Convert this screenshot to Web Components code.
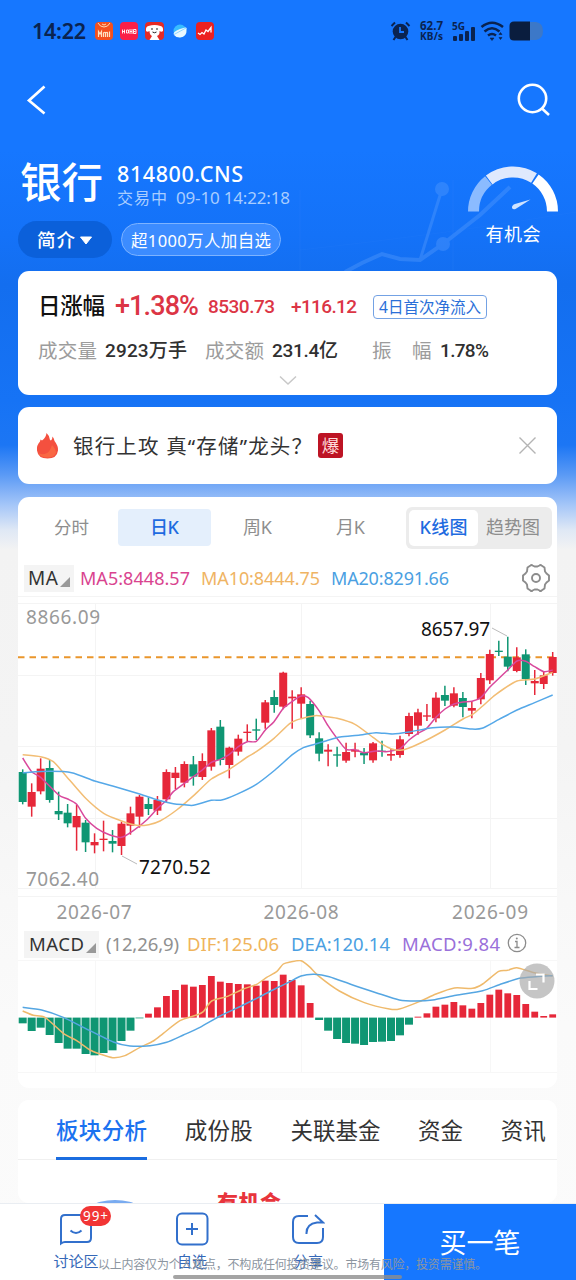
<!DOCTYPE html>
<html lang="zh-CN">
<head>
<meta charset="utf-8">
<title>银行 814800.CNS</title>
<style>
html,body{margin:0;padding:0}
body{width:576px;height:1280px;overflow:hidden;font-family:"Noto Sans","Noto Sans CJK SC",sans-serif;background:#fafafa}
</style>
</head>
<body>
<sector-page></sector-page>
<script>
const define=(name,html,setup)=>{
  const t=document.createElement('template');t.innerHTML=html;
  customElements.define(name,class extends HTMLElement{
    constructor(){super();this.attachShadow({mode:'open'}).append(t.content.cloneNode(true));}
    connectedCallback(){if(setup)setup(this,this.shadowRoot);}
  });
};

/* Single-line label: s = font size, w = width the text is tracked to. */
define('fit-text',`<style>:host{display:block;flex:none;white-space:nowrap;line-height:1.2}span{display:inline-block}</style><span><slot></slot></span>`,(el,root)=>{
  const span=root.querySelector('span');
  if(el.hasAttribute('s'))el.style.fontSize=el.getAttribute('s')+'px';
  const w=+el.getAttribute('w');
  if(w){
    const n=el.textContent.length;
    const nat=span.getBoundingClientRect().width;
    span.style.letterSpacing=((w-nat)/Math.max(1,n-1))+'px';
    el.style.width=w+'px';
  }
});

define('status-bar',`<style>
:host{display:flex;align-items:center;height:62px;padding:0 32px 0 32px;box-sizing:border-box;color:#0a2350}
.apps{display:flex;gap:7px;margin-left:9px;flex:1}
.sys{display:flex;align-items:center}
svg{display:block;overflow:visible}
.rate{margin:0 9px 0 9px;font-weight:700}
.rate fit-text{line-height:11px}
</style>
<fit-text s="21.500" w="54" style="font-weight:600">14:22</fit-text>
<div class="apps">
<svg width="18" height="18" viewBox="0 0 18 18"><rect width="18" height="18" rx="4" fill="#f4501f"/><path d="M3 1q2 4 6 4t6-4M7 2q2 2 4 0" fill="none" stroke="#ffd9b0" stroke-width="1"/><path d="M3.500 15V9.500l1.500 2.500 1.500-2.500V15M8.500 15v-4q1.500-1.500 2 0v4M10.500 11q2-1.500 2 0v4M14.500 9.500V15" fill="none" stroke="#ffe3c4" stroke-width="1.200"/></svg>
<svg width="18" height="18" viewBox="0 0 18 18"><rect width="18" height="18" rx="4" fill="#fb1f48"/><path d="M2.500 7.500v4M4.500 7.500v4M2 9.500h3M6.500 8v3h2V8zM10 7v5M12 7v5M10 9.500h2M13.500 7.500h2.500v4h-2.500zM13.500 9.500h2" fill="none" stroke="#fff" stroke-width=".9"/></svg>
<svg width="19" height="18" viewBox="0 0 19 18"><rect width="19" height="18" rx="4" fill="#e52a25"/><path d="M3.500 4Q.5 4.500 1 9q1.500 1.500 3.500 0 0 4 2.500 5l-2.500 4h10L12 14q3-1 2.500-5 2 1.500 3.500 0 .5-4.500-2.500-5-6-2-12 0z" fill="#fff"/><circle cx="7" cy="7" r=".8"/><circle cx="12" cy="7" r=".8"/><path d="M7.500 10q2 1.500 4 0" fill="none" stroke="#222"/></svg>
<svg width="18" height="18" viewBox="0 0 18 18"><circle cx="9" cy="9" r="6.500" fill="#38bcff"/><path d="M3 13Q1 10 9 7t6.500 0Q16 15 9 15.500 5 15.500 3 13z" fill="#eaf8ff"/><path d="M3 12.500 15 6" stroke="#8fd7ff"/></svg>
<svg width="18" height="18" viewBox="0 0 18 18"><rect width="18" height="18" rx="4" fill="#ec2020"/><path d="M2 11l2 1.500 2-2 2 1.500 2-4 2 1.500 3-4v5" fill="none" stroke="#fff" stroke-width="1.300"/></svg>
</div>
<div class="sys">
<svg width="20" height="20" viewBox="0 0 20 20"><circle cx="9.500" cy="10.500" r="7.800" fill="#0a2350"/><path d="M.5 5 4 1.500M18.500 5 15 1.500M4.500 16l-2 3M14.500 16l2 3" stroke="#0a2350" stroke-width="2"/><path d="M9 6v5h4" fill="none" stroke="#1677ff" stroke-width="1.800"/></svg>
<div class="rate"><fit-text s="11.500" w="23">62.7</fit-text><fit-text s="10" w="23">KB/s</fit-text></div>
<svg width="23" height="20" viewBox="0 0 23 20" fill="#0a2350"><text x="0" y="8.500" font-size="10.500" font-weight="700" font-family="Noto Sans" textLength="13" lengthAdjust="spacingAndGlyphs">5G</text><rect x="1" y="15" width="4" height="5" rx="1"/><rect x="7" y="13" width="4" height="7" rx="1"/><rect x="13" y="10" width="4" height="10" rx="1"/><rect x="19" y="6" width="4" height="14" rx="1"/></svg>
<svg width="25" height="20" viewBox="0 0 25 20" style="margin-left:5px" fill="none" stroke="#0a2350" stroke-width="2.500"><path d="M1.500 6Q12 -2.500 23 6M4.500 10.500Q12 4 19.500 10.500M8 14.500Q12 11.500 16 14.500"/><path d="M10 17h4l-2 2.500zM19 13.500l1.500-2 1.500 2zM19 16.500l1.500 2 1.500-2z" fill="#0a2350" stroke-width=".6"/></svg>
<svg width="35" height="20" viewBox="0 0 35 20" style="margin-left:4px"><path d="M5 1h22q7 1 7 9t-7 9H5q-4 0-4-4V5q0-4 4-4z" fill="#3c78c8"/><path d="M5 .5h16v19H5q-4.500 0-4.500-4.500V5Q.5.500 5 .500z" fill="#0a1d3e"/></svg>
</div>`);

define('nav-bar',`<style>:host{display:flex;justify-content:space-between;align-items:center;height:76px;padding:0 25px 0 26px;box-sizing:border-box}svg{display:block}</style>
<svg width="22" height="30" viewBox="0 0 22 30"><path d="M18.500 1.500 3 15.500 18.500 28.500" fill="none" stroke="#fff" stroke-width="2.700"/></svg>
<svg width="34" height="34" viewBox="0 0 34 34" fill="none" stroke="#fff" stroke-width="2.600"><circle cx="15.500" cy="15.500" r="13.700"/><path d="M25 25.500 32 32"/></svg>`);

define('opportunity-gauge',`<style>:host{display:flex;flex-direction:column;align-items:center;width:90px;color:#fff}svg{display:block}fit-text{margin-top:12px}</style>
<svg width="90" height="46" viewBox="-45 -45.500 90 46" fill="none" stroke-width="11">
<path d="M-39.500 0A39.500 39.500 0 0 1-24.500-31" stroke="#8bbbff"/><path d="M-23.800-31.500A39.500 39.500 0 0 1 21-33.500" stroke="#dfe9fd"/><path d="M22.500-32.500A39.500 39.500 0 0 1 39.500 0" stroke="#fff"/>
<path d="M17.500-12 2.500-2.500Q-1-1.500-1-4 -1-6.500 2-7.500z" fill="#cfe3ff" stroke="none"/></svg>
<fit-text s="18" w="55">有机会</fit-text>`);

define('sector-header',`<style>
:host{display:flex;justify-content:space-between;height:133px;box-sizing:border-box;padding:20px 18px 0 18px;color:#fff}
.id{display:flex;align-items:center;height:50px;margin-left:2px}
.meta{margin-left:14px;padding-top:4px}
.time{color:#a9cdff;display:flex;gap:9px}
.pills{display:flex;gap:9px;align-items:center;margin-top:13px}
.intro{display:flex;align-items:center;gap:3px;box-sizing:border-box;width:94px;height:37px;border-radius:19px;background:#0b60da;padding:2px 0 0 19px;font-weight:500}
.fans{box-sizing:border-box;width:160px;height:33px;border-radius:17px;border:1px solid #7db3ff;background:#3c8cff;display:flex;align-items:center;padding:2px 0 0 9px}
opportunity-gauge{margin-top:8px}
</style>
<div><div class="id"><fit-text s="41.500" w="83" style="font-weight:500;font-family:'Noto Sans CJK SC';margin-top:-4px">银行</fit-text>
<div class="meta"><fit-text s="21.500" w="126" style="font-weight:500;line-height:25px">814800.CNS</fit-text><div class="time"><fit-text s="16" w="50" style="line-height:23px;padding-top:1px">交易中</fit-text><fit-text s="17" w="114" style="line-height:23px">09-10 14:22:18</fit-text></div></div></div>
<div class="pills"><div class="intro"><fit-text s="18.500" w="38">简介</fit-text><svg width="14" height="9" viewBox="0 0 14 9" style="margin-left:1px"><path d="M1.500 1h11L7 8z" fill="#fff" stroke="#fff" stroke-linejoin="round"/></svg></div><div class="fans"><fit-text s="16.500" w="140">超1000万人加自选</fit-text></div></div></div>
<opportunity-gauge></opportunity-gauge>`);

define('ui-card',`<style>:host{display:block;box-sizing:border-box;margin:0 19px 0 18px;background:#fff;border-radius:11px}</style><slot></slot>`);

define('quote-summary',`<style>
:host{display:block;height:124px;box-sizing:border-box;padding-top:17px}
.row{display:flex;align-items:center;height:34px;padding-left:20px}
.red{color:#dc3545;font-family:Roboto;font-weight:500}
.tag{box-sizing:border-box;width:114px;height:24px;border:1px solid #74a2e4;border-radius:4px;color:#2a6fd8;display:flex;align-items:center;justify-content:center;margin-left:16px;margin-top:4px}
.two{height:32px;margin-top:13px;color:#9c9c9c}
.two .v{color:#303030;font-weight:500;font-family:Roboto,"Noto Sans CJK SC"}
svg{display:block;margin:8px auto 0}
</style>
<div class="row"><fit-text s="22.500" w="67" style="color:#111;font-weight:500">日涨幅</fit-text><fit-text class="red" s="27" w="84" style="margin:2px 0 0 10px">+1.38%</fit-text><fit-text class="red" s="19" w="67" style="margin:5px 0 0 9px">8530.73</fit-text><fit-text class="red" s="19" w="66" style="margin:5px 0 0 16px">+116.12</fit-text><div class="tag"><fit-text s="15.500" w="102" style="padding-top:1px">4日首次净流入</fit-text></div></div>
<div class="row two"><fit-text s="19.500" w="59">成交量</fit-text><fit-text class="v" s="19" w="82" style="margin-left:8px">2923万手</fit-text><fit-text s="19.500" w="59" style="margin-left:18px">成交额</fit-text><fit-text class="v" s="19" w="66" style="margin-left:8px">231.4亿</fit-text><fit-text s="19.500" w="19" style="margin-left:34px">振</fit-text><fit-text s="19.500" w="19" style="margin-left:21px">幅</fit-text><fit-text class="v" s="19" w="49" style="margin-left:9px">1.78%</fit-text></div>
<svg width="18" height="11" viewBox="0 0 18 11"><path d="M1 1.500 9 9l8-7.500" fill="none" stroke="#c8c8c8" stroke-width="1.500"/></svg>`);

define('news-strip',`<style>
:host{display:flex;align-items:center;height:77px;padding:0 20px 0 18px;box-sizing:border-box;color:#333}
.hot{width:25px;height:25px;border-radius:3px;background:#bd1424;color:#ffdada;display:flex;align-items:center;justify-content:center;margin-left:6px}
.close{margin-left:auto}
</style>
<svg width="23" height="28" viewBox="0 0 23 28"><path d="M10.500 1q3 2.500 3.500 7l1 .5Q16.500 7 16.500 4.500q1.500 1.500 2 4.500 4 5 3.500 9.500Q21 26.500 11.500 26.500T1 18.500Q.5 13 4 9.500l.5-2 1.500 1Q10 6 10.500 1z" fill="#f4503f"/><path d="M2 21q4 2 8 .5t6-8.500q4 4 4 8-2 4.500-8.500 4.500T2 21z" fill="#fb7046" opacity=".7"/></svg>
<fit-text s="20.500" w="239" style="margin-left:14px;padding-top:2px">银行上攻 真“存储”龙头？</fit-text>
<div class="hot"><fit-text s="17.500" w="17.500">爆</fit-text></div>
<svg class="close" width="19" height="19" viewBox="0 0 19 19"><path d="M1.500 1.500l16 16M17.500 1.500l-16 16" stroke="#b4b4b4" stroke-width="1.400"/></svg>`);

define('period-tabs',`<style>
:host{display:flex;align-items:center;padding:11px 5px 0 7px;height:39px;color:#8e8e8e}
.t{width:93px;height:37px;display:flex;align-items:center;justify-content:center;border-radius:4px}
.on{background:#e4effc;color:#1e6be0;font-weight:500}
.mode{display:flex;box-sizing:border-box;height:42px;width:146px;margin-left:auto;border-radius:6px;background:#ececec;padding:3px;align-items:center}
.k{width:69px;height:36px;background:#fff;border-radius:5px;color:#1e6be0;font-weight:500;display:flex;align-items:center;justify-content:center;margin-right:8px}
</style>
<div class="t"><fit-text s="17.500" w="35">分时</fit-text></div><div class="t on"><fit-text s="18" w="29">日K</fit-text></div><div class="t"><fit-text s="18" w="29">周K</fit-text></div><div class="t"><fit-text s="18" w="29">月K</fit-text></div>
<div class="mode"><div class="k"><fit-text s="18" w="48">K线图</fit-text></div><fit-text s="18" w="54">趋势图</fit-text></div>`);

define('indicator-chip',`<style>:host{display:flex;align-items:flex-end;background:#f4f4f4;color:#333;height:27px;box-sizing:border-box;padding:0 3px 2px 4px;flex:none}svg{margin:0 0 3px 2px}</style><slot></slot><svg width="10" height="10"><path d="M10 0v10H0z" fill="#999"/></svg>`);

define('ma-legend',`<style>:host{display:flex;align-items:center;height:30px;padding:16px 6px 0 6px;font-size:18px}svg{margin-left:auto}</style>
<indicator-chip style="width:50px"><fit-text s="19" w="30">MA</fit-text></indicator-chip>
<fit-text s="18" w="110" style="color:#d9448f;margin:1px 0 0 6px">MA5:8448.57</fit-text><fit-text s="18" w="119" style="color:#efb464;margin:1px 0 0 11px">MA10:8444.75</fit-text><fit-text s="18" w="118" style="color:#4b9fe2;margin:1px 0 0 11px">MA20:8291.66</fit-text>
<svg width="30" height="30" viewBox="-15 -15 30 30" fill="none" stroke="#8c8c8c" stroke-width="1.900" stroke-linejoin="round"><circle r="4"/><path d="M-5.500-12.500Q-4.500-13.500-3.500-12.500L-1.500-11.500H1.500L3.500-12.500Q4.500-13.500 5.500-12.500L8.500-10.500 9-6.500 10.500-4.500 13-2.500V2.500L10.500 4.500 9 6.500 8.500 10.500 5.500 12.500Q4.500 13.500 3.500 12.500L1.500 11.500H-1.500L-3.500 12.500Q-4.500 13.500-5.500 12.500L-8.500 10.500-9 6.500-10.500 4.500-13 2.500V-2.500L-10.500-4.500-9-6.500-8.500-10.500z"/></svg>`);

const X0=22.7,STEP=8.983;
const smooth=p=>{ // Catmull-Rom spline through the points
  let d=`M${p[0]}`;
  for(let i=0;i<p.length-1;i++){
    const a=p[i-1]||p[i],b=p[i],c=p[i+1],e=p[i+2]||c;
    d+=`C${b[0]+(c[0]-a[0])/8},${b[1]+(c[1]-a[1])/8} ${c[0]-(e[0]-b[0])/8},${c[1]-(e[1]-b[1])/8} ${c[0]},${c[1]}`;
  }
  return d;
};
const pts=(s,oy)=>s.trim().split(/\s+/).map(q=>{const[x,y]=q.split(',').map(Number);return[x/3,oy+y/3]});
/* colour, body top, body bottom, high, low – one entry per trading day */
const DAYS=`g516,606,508,613 r576,620,550,650 r506,574,475,583 g504,600,480,608 g633,643,575,660 g638,670,612,682 r648,682,615,752 g668,727,660,756 r726,736,700,760 r716,720,662,754 g723,731,690,757 r671,738,665,765 r640,677,620,704 r590,650,585,683 g612,627,592,645 r600,632,588,645 r516,598,508,606 r518,534,501,568 r492,548,484,562 g493,530,468,557 r483,531,460,540 r391,500,384,512 g380,480,360,496 r443,495,440,535 r416,455,404,467 r395,399,373,425 g388,392,356,420 r307,368,300,386 g291,315,271,338 r218,320,215,328 r290,295,271,386 r283,311,262,355 g312,406,302,414 g415,461,397,484 r449,455,433,499 g463,467,440,500 r456,482,428,488 r449,455,428,472 g458,466,444,492 r430,481,426,488 g452,456,422,470 r462,467,447,482 r418,465,407,473 r348,402,338,409 r337,377,326,404 r346,350,312,363 r293,355,277,367 g285,302,257,318 r280,317,262,322 g294,321,276,352 r324,332,304,355 r234,298,219,313 r162,241,149,252 g152,156,122,168 g170,200,110,214 r172,213,142,217 g163,237,148,255 r243,250,210,285 r226,252,215,267 r171,219,156,227`.split(' ').map(s=>[s[0],...s.slice(1).split(',').map(Number)]);
const RED='#e62739',GREEN='#0f9673';
const MA={
'#d9489c':'68,474 95,515 122,532 176,585 203,597 230,613 257,655 290,685 330,705 365,712 400,692 440,660 473,625 500,600 520,575 553,550 580,530 607,510 634,487 661,478 688,463 715,440 742,425 769,424 796,390 822,365 850,325 877,304 903,288 925,293 957,332 984,377 1011,415 1038,448 1065,449 1092,458 1128,453 1158,455 1200,446 1227,420 1254,400 1280,385 1308,352 1335,327 1362,312 1389,306 1416,304 1442,293 1469,262 1497,235 1524,209 1551,183 1577,184 1604,200 1632,215 1658,210',
'#f2bd74':'68,464 122,470 160,485 200,530 257,595 311,640 365,663 410,676 446,674 480,663 530,630 585,583 634,537 688,508 742,471 769,455 822,415 870,370 903,356 945,347 970,349 1011,355 1065,373 1119,412 1148,433 1173,446 1200,451 1227,444 1280,420 1335,390 1389,357 1418,343 1448,318 1488,283 1551,243 1604,237 1658,217',
'#55a8e8':'68,518 150,514 215,518 284,543 338,558 419,582 473,600 520,611 553,614 580,616 634,601 665,600 710,583 769,553 825,510 877,464 910,443 940,434 980,422 1020,411 1080,405 1128,398 1178,402 1227,396 1298,383 1363,381 1413,387 1446,385 1497,358 1551,330 1604,308 1658,285'};

define('kline-chart',`<style>:host{display:block;height:328px}svg{display:block;overflow:visible}text{font-family:"Noto Sans",sans-serif;font-size:19px}</style><svg width="539" height="328" viewBox="18 593 539 328"></svg>`,(el,root)=>{
  let s='<g stroke="#f4f4f4">'+[596.5,603.5,675.5,746.5,818.500,888.500,896.500].map(y=>`<path d="M18 ${y}H557"/>`).join('')+[95.5,301.5,490.5].map(x=>`<path d="M${x} 604V888"/>`).join('')+'</g>';
  s+=`<path d="M18 657.200H557" stroke="#ea962c" stroke-width="2" stroke-dasharray="6.500 5"/>`;
  s+='<g fill="#999"><text x="26" y="623.500" textLength="74">8866.09</text><text x="26" y="885.500" textLength="73">7062.40</text><text x="56.500" y="918.500" textLength="75">2026-07</text><text x="263.500" y="918.500" textLength="75">2026-08</text><text x="452" y="918.500" textLength="76">2026-09</text></g>';
  DAYS.forEach(([c,t,b,h,l],i)=>{
    const x=X0+STEP*i,f=c=='r'?RED:GREEN;
    s+=`<path d="M${x} ${600+h/3}V${600+l/3}" stroke="${f}" stroke-width="1.500"/><rect x="${x-4}" y="${600+t/3}" width="8" height="${(b-t)/3}" fill="${f}"/>`;
  });
  for(const[c,p]of Object.entries(MA))s+=`<path d="${smooth(pts(p,600))}" fill="none" stroke="${c}" stroke-width="1.500"/>`;
  s+='<path d="M122 856 137 864M492 628 507 636" stroke="#bbb" fill="none"/><g fill="#111"><text x="139" y="873.500" textLength="71.500">7270.52</text><text x="421" y="636" textLength="69">8657.97</text></g>';
  root.querySelector('svg').innerHTML=s;
});

define('macd-legend',`<style>:host{display:flex;align-items:center;height:32px;margin-top:7px;padding:0 7px 0 6px;box-sizing:border-box}fit-text{line-height:25px;margin-top:-1px}</style>
<indicator-chip style="width:75px;padding-left:5px"><fit-text s="18.500" w="55">MACD</fit-text></indicator-chip>
<fit-text s="18.500" w="73" style="color:#909090;margin-left:7px">(12,26,9)</fit-text><fit-text s="18.500" w="92" style="color:#efb45c;margin-left:8px">DIF:125.06</fit-text><fit-text s="18.500" w="99" style="color:#4b9fe2;margin-left:12px">DEA:120.14</fit-text><fit-text s="18.500" w="98" style="color:#9a70da;margin-left:12px">MACD:9.84</fit-text>
<svg width="20" height="20" viewBox="0 0 20 20" style="margin:-2px 0 0 7px;flex:none"><circle cx="10" cy="10" r="8.700" fill="none" stroke="#8c8c8c" stroke-width="1.300"/><path d="M8 8.500h2v6M7.500 14.500h5" fill="none" stroke="#8c8c8c" stroke-width="1.300"/><circle cx="9.800" cy="5.600" r="1" fill="#8c8c8c"/></svg>`);

const HIST=[400,423,413,435,459,476,476,492,496,489,481,453,422,385,371,352,318,300,284,290,285,258,275,279,282,283,287,272,273,254,270,286,339,390,422,447,459,461,465,456,455,453,436,404,380,370,350,344,336,346,356,339,314,299,310,315,342,365,378,373];
define('macd-chart',`<style>:host{display:block;height:128px}svg{display:block}</style><svg width="539" height="128" viewBox="18 960 539 128"></svg>`,(el,root)=>{
  let s='<path d="M18 960.500H557M95.500 960V1072M301.500 960V1072M490.500 960V1072M18 1072.500H557" stroke="#f7f7f7"/>';
  HIST.forEach((v,i)=>{
    const x=X0+STEP*i,up=v<382,y=890+v/3;
    s+=up?`<rect x="${x-3.4}" y="${y}" width="6.800" height="${1017.600-y}" fill="${RED}"/>`:`<rect x="${x-4}" y="1017.600" width="8" height="${y-1017.600}" fill="${GREEN}"/>`;
  });
  const dif='68,363 100,376 135,382 190,430 230,452 270,480 300,492 338,503 375,497 420,472 460,453 490,430 540,392 590,375 610,365 635,333 680,320 730,297 770,283 800,262 830,245 850,222 870,216 903,212 928,230 958,260 1018,303 1093,338 1168,357 1198,357 1258,335 1308,312 1363,294 1418,295 1448,282 1496,244 1523,241 1550,233 1603,248 1658,258';
  const dea='68,352 125,360 190,382 250,412 340,456 390,468 450,467 500,457 550,435 600,412 660,378 730,345 780,320 830,294 870,275 903,258 943,253 988,260 1058,285 1128,308 1198,330 1248,333 1298,330 1368,316 1448,302 1498,284 1558,265 1608,260 1658,257';
  s+=`<path d="${smooth(pts(dif,890))}" fill="none" stroke="#efba6c" stroke-width="1.500"/><path d="${smooth(pts(dea,890))}" fill="none" stroke="#55a6e2" stroke-width="1.500"/>`;
  s+='<circle cx="537" cy="981" r="17.500" fill="#aaa" opacity=".68"/><path d="M529.500 981v8h8M536 974.500h7.500v8" fill="none" stroke="#fff" stroke-width="2.200"/>';
  root.querySelector('svg').innerHTML=s;
});

define('section-tabs',`<style>
:host{display:flex;height:60px;border-bottom:1px solid #f0f0f0;box-sizing:border-box;padding-left:38px;color:#333}
.t{height:60px;display:flex;align-items:center;box-sizing:border-box;margin-right:38px;flex:none}
.t+.t{margin-left:-.3px}
.on{color:#1b72f0;font-weight:500;border-bottom:3px solid #1b6de0;padding-top:3px}
</style>
<div class="t on"><fit-text s="22.500" w="91">板块分析</fit-text></div><div class="t"><fit-text s="22.500" w="68">成份股</fit-text></div><div class="t"><fit-text s="22.500" w="90">关联基金</fit-text></div><div class="t"><fit-text s="22.500" w="45">资金</fit-text></div><div class="t"><fit-text s="22.500" w="45">资讯</fit-text></div>`);

define('analysis-peek',`<style>:host{display:flex;height:43px;overflow:hidden;align-items:flex-start}svg{margin:39px 0 0 66px;flex:none}fit-text{color:#e8343c;font-weight:900;margin:30px 0 0 73px}</style>
<svg width="60" height="30" viewBox="0 0 60 30"><ellipse cx="31" cy="25" rx="38" ry="24" fill="#79abf0"/></svg><fit-text s="21" w="64">有机会</fit-text>`);

define('bottom-bar',`<style>
:host{display:flex;height:77px;background:#fff;border-top:1px solid #e9edf2;box-sizing:border-box;color:#3568b8;position:relative}
.a{width:116px;flex:none;display:flex;flex-direction:column;align-items:center;position:relative}
.acts{display:flex;width:384px;padding-left:18px;box-sizing:border-box}
.a svg{display:block;margin-top:8px}
.a fit-text{margin-top:6px}
.badge{position:absolute;left:62px;top:2px;width:31px;height:20px;border-radius:10px;background:#f23535;color:#fff;display:flex;align-items:center;justify-content:center}
.a .badge fit-text{margin:0}
.buy{width:192px;background:#1677ff;color:#fff;display:flex;align-items:center;justify-content:center}
.note{position:absolute;left:98px;top:54px;color:#8c959f}
.home{position:absolute;left:173px;top:71px;width:229px;height:4px;border-radius:3px;background:#8d8d8d;opacity:.8}
</style>
<div class="acts">
<div class="a"><svg width="34" height="34" viewBox="0 0 34 34" fill="none" stroke="#3270cc" stroke-width="2"><path d="M2 31.500V7q0-4 4-4h22q4 0 4 4v19q0 4-4 4H6q-2 0-4 1.500z"/><path d="M11.500 18.500q5.500 5 11 0"/></svg><fit-text s="15" w="45">讨论区</fit-text><div class="badge"><fit-text s="13.500" w="25">99+</fit-text></div></div>
<div class="a"><svg width="34" height="34" viewBox="0 0 34 34" fill="none" stroke="#3270cc" stroke-width="2"><rect x="2" y="1.500" width="30.500" height="31" rx="5"/><path d="M17 11v12M11 17h12"/></svg><fit-text s="15" w="30">自选</fit-text></div>
<div class="a"><svg width="34" height="34" viewBox="0 0 34 34" fill="none" stroke="#3270cc" stroke-width="2"><path d="M17 4H8Q2 4 2 10v15q0 6 6 6h18q6 0 6-6v-9"/><path d="M24 3l8 7.500H26Q15 12 15.500 22"/></svg><fit-text s="15" w="30">分享</fit-text></div>
</div>
<div class="buy"><fit-text s="27" w="81" style="padding-top:2px">买一笔</fit-text></div>
<fit-text class="note" s="12" w="389">以上内容仅为个人观点，不构成任何投资建议。市场有风险，投资需谨慎。</fit-text>
<div class="home"></div>`);

define('sector-page',`<style>
:host{display:flex;flex-direction:column;width:576px;height:1280px;overflow:hidden;position:relative;
background:linear-gradient(#1677ff 0,#1677ff 150px,#1472f8 235px,#136eef 285px,#1673f5 400px,#1c76f4 445px,#5b9af5 475px,#a5c6f8 505px,#dfe8f5 530px,#f3f3f3 550px,#f4f4f4 750px,#f8f8f8 900px,#fafafa 1024px,#fbfbfb)}
.decor{position:absolute;left:0;top:0}
status-bar,nav-bar,sector-header,ui-card,bottom-bar{position:relative;flex:none}
</style>
<svg class="decor" width="576" height="490" viewBox="0 0 576 490" fill="none" stroke="#6aa8ff" opacity=".3">
<path d="M345 272 362 263 382 254 400 259 420 260 443 244 480 215 510 187" stroke-width="4"/><path d="M420 260 442 189" stroke-width="3"/><circle cx="442" cy="189" r="7" fill="#6aa8ff" stroke="none"/><circle cx="443" cy="244" r="7" fill="#6aa8ff" stroke="none"/><path d="M300 190V270M453 180V270" opacity=".25"/><path d="M300 250Q440 235 576 212" opacity=".15"/></svg>
<status-bar></status-bar><nav-bar></nav-bar><sector-header></sector-header>
<ui-card><quote-summary></quote-summary></ui-card>
<ui-card style="margin-top:12px"><news-strip></news-strip></ui-card>
<ui-card style="margin-top:13px;height:591px"><period-tabs></period-tabs><ma-legend></ma-legend><kline-chart></kline-chart><macd-legend></macd-legend><macd-chart></macd-chart></ui-card>
<ui-card style="margin-top:12px;height:103px;overflow:hidden"><section-tabs></section-tabs><analysis-peek></analysis-peek></ui-card>
<bottom-bar></bottom-bar>`);
</script>
</body>
</html>
